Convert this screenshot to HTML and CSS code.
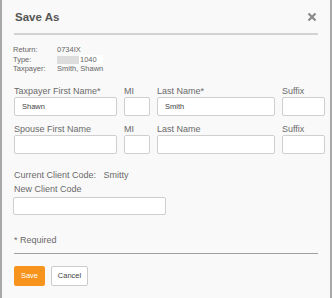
FILE: index.html
```html
<!DOCTYPE html>
<html lang="en">
<head>
<meta charset="UTF-8" />
<title>Save As</title>
<link rel="stylesheet" href="styles.css">
</head>
<body>
  <section class="dialog" aria-label="Save As">
    <header class="dialog-header">
      <h1>Save As</h1>
      <svg class="close" viewBox="0 0 10 10" aria-label="Close">
        <path d="M1.5 1.5 L8.5 8.5 M8.5 1.5 L1.5 8.5"></path>
      </svg>
    </header>

    <dl class="info">
      <dt>Return:</dt><dd>0734IX</dd>
      <dt>Type:</dt><dd><span class="blur"></span><span class="type-value">1040</span></dd>
      <dt>Taxpayer:</dt><dd>Smith, Shawn</dd>
    </dl>

    <div class="names">
      <label class="field"><span>Taxpayer First Name*</span><input type="text" value="Shawn"></label>
      <label class="field"><span>MI</span><input type="text"></label>
      <label class="field"><span>Last Name*</span><input type="text" value="Smith"></label>
      <label class="field"><span>Suffix</span><input type="text"></label>

      <label class="field"><span>Spouse First Name</span><input type="text"></label>
      <label class="field"><span>MI</span><input type="text"></label>
      <label class="field"><span>Last Name</span><input type="text"></label>
      <label class="field"><span>Suffix</span><input type="text"></label>
    </div>

    <div class="client">
      <p class="current">Current Client Code: <span>Smitty</span></p>
      <label class="field"><span>New Client Code</span><input type="text" class="code-input"></label>
    </div>

    <p class="required">* Required</p>

    <footer class="actions">
      <button type="button" class="btn btn-primary">Save</button>
      <button type="button" class="btn btn-cancel">Cancel</button>
    </footer>
  </section>
</body>
</html>
```

FILE: styles.css
```css
*, *::before, *::after {
  box-sizing: border-box;
}

body {
  margin: 0;
  font-family: 'Liberation Sans', Arial, sans-serif;
  background: #f9f9f9;
  color: #666;
}

.dialog {
  height: 298px;
  border-left: 2px solid #a8a8a8;
  border-right: 2px solid #a8a8a8;
  padding: 0 12px;
}

/* Header */
.dialog-header {
  display: flex;
  justify-content: space-between;
  align-items: center;
  height: 35px;
  border-bottom: 2px solid #d2d2d2;
  padding: 0 1px 0 1px;
}

h1 {
  margin: 0;
  font-size: 11.5px;
  font-weight: bold;
  color: #555;
}

.close {
  width: 10px;
  height: 10px;
  stroke: #8a8a8a;
  stroke-width: 2.2;
  fill: none;
}

/* Return info */
.info {
  display: grid;
  grid-template-columns: 44px auto;
  margin: 10px 0 0 -1px;
  font-size: 7.5px;
  line-height: 9.5px;
  color: #666;
}

.info dt, .info dd {
  margin: 0;
}

.blur {
  display: inline-block;
  width: 22px;
  height: 8px;
  background: #dcdcdc;
  vertical-align: middle;
}

.type-value {
  background: #fff;
  padding: 0 6px 0 1px;
}

/* Name fields */
.names {
  display: grid;
  grid-template-columns: 103px 26px 118px 43px;
  column-gap: 7px;
  row-gap: 7px;
  margin-top: 11px;
}

.field {
  display: flex;
  flex-direction: column;
}

.field span {
  font-size: 9px;
  line-height: 12px;
  color: #6a6a6a;
}

input {
  height: 19px;
  width: 100%;
  border: 1px solid #cfcfcf;
  border-radius: 2px;
  background: #fff;
  padding: 0 7px;
  font-family: inherit;
  font-size: 7.5px;
  color: #444;
}

/* Client code */
.client {
  margin-top: 15px;
}

.current {
  margin: 0 0 2px;
  font-size: 9px;
  line-height: 12px;
  color: #6a6a6a;
}

.current span {
  margin-left: 5px;
}

.code-input {
  width: 153px;
  height: 18px;
  margin: 2px 0 0 -1px;
}

.required {
  margin: 19px 0 0;
  padding-bottom: 7px;
  font-size: 9px;
  line-height: 12px;
  color: #6a6a6a;
  border-bottom: 1px solid #a0a0a0;
}

/* Buttons */
.actions {
  display: flex;
  gap: 6px;
  margin-top: 12px;
}

.btn {
  height: 20px;
  padding: 0;
  border: 1px solid #ccc;
  border-radius: 2px;
  background: #fff;
  font-family: inherit;
  font-size: 7.5px;
  color: #444;
}

.btn-primary {
  width: 31px;
  background: #f7941d;
  border-color: #f7941d;
  color: #fff;
}

.btn-cancel {
  width: 37px;
}
```
